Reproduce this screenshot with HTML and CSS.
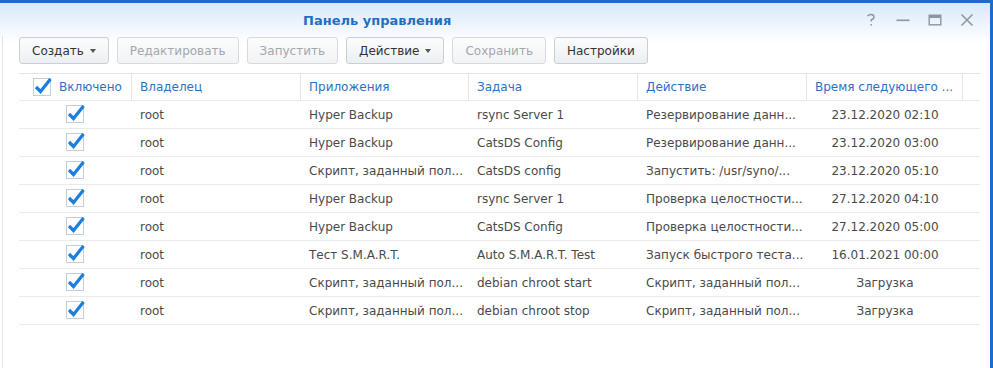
FILE: index.html
```html
<!DOCTYPE html>
<html lang="ru">
<head>
<meta charset="utf-8">
<title>Панель управления</title>
<link rel="stylesheet" href="styles.css">
</head>
<body>
<div class="window">
  <div class="titlebar">
    <div class="title">Панель управления</div>
    <div class="controls">
      <span class="ctl"><svg width="14" height="14" viewBox="0 0 14 14"><path d="M3.5 3.2 Q4.5 1.5 7 1.5 Q10 1.5 10 4 Q10 6 7.2 6.8 L7.2 8.5" fill="none" stroke="#8d959d" stroke-width="1.4"/><rect x="6.5" y="11" width="1.4" height="1.6" fill="#8d959d"/></svg></span>
      <span class="ctl"><svg width="14" height="14" viewBox="0 0 14 14"><rect x="0.5" y="6.5" width="13" height="1.6" fill="#8d959d"/></svg></span>
      <span class="ctl"><svg width="14" height="14" viewBox="0 0 14 14"><rect x="1.2" y="2.2" width="11.6" height="9.6" fill="none" stroke="#8d959d" stroke-width="1.4"/><rect x="1" y="2" width="12" height="3" fill="#8d959d"/></svg></span>
      <span class="ctl"><svg width="14" height="14" viewBox="0 0 14 14"><path d="M1.5 1.5 L12.5 12.5 M12.5 1.5 L1.5 12.5" stroke="#8d959d" stroke-width="1.5"/></svg></span>
    </div>
  </div>
  <div class="content">
    <div class="toolbar">
      <button class="btn">Создать<span class="caret"></span></button>
      <button class="btn disabled">Редактировать</button>
      <button class="btn disabled">Запустить</button>
      <button class="btn">Действие<span class="caret"></span></button>
      <button class="btn disabled">Сохранить</button>
      <button class="btn">Настройки</button>
    </div>
    <div class="grid">
      <div class="row head">
        <div class="cell c-check-head"><svg class="cb" width="20" height="20" viewBox="0 0 20 20"><rect x="0.5" y="2.5" width="17" height="17" fill="#fff" stroke="#c3ced9"/><polyline points="3,11 7.5,15.5 17.5,3" fill="none" stroke="#1a7fe0" stroke-width="3.2"/></svg><span>Включено</span></div>
        <div class="cell">Владелец</div>
        <div class="cell">Приложения</div>
        <div class="cell">Задача</div>
        <div class="cell">Действие</div>
        <div class="cell">Время следующего ...</div>
        <div class="cell last"></div>
      </div>
      <div class="row">
        <div class="cell c-check"><svg class="cb" width="20" height="20" viewBox="0 0 20 20"><rect x="0.5" y="2.5" width="17" height="17" fill="#fff" stroke="#c3ced9"/><polyline points="3,11 7.5,15.5 17.5,3" fill="none" stroke="#1a7fe0" stroke-width="3.2"/></svg></div>
        <div class="cell">root</div>
        <div class="cell">Hyper Backup</div>
        <div class="cell">rsync Server 1</div>
        <div class="cell">Резервирование данн...</div>
        <div class="cell center">23.12.2020 02:10</div>
        <div class="cell last"></div>
      </div>
      <div class="row">
        <div class="cell c-check"><svg class="cb" width="20" height="20" viewBox="0 0 20 20"><rect x="0.5" y="2.5" width="17" height="17" fill="#fff" stroke="#c3ced9"/><polyline points="3,11 7.5,15.5 17.5,3" fill="none" stroke="#1a7fe0" stroke-width="3.2"/></svg></div>
        <div class="cell">root</div>
        <div class="cell">Hyper Backup</div>
        <div class="cell">CatsDS Config</div>
        <div class="cell">Резервирование данн...</div>
        <div class="cell center">23.12.2020 03:00</div>
        <div class="cell last"></div>
      </div>
      <div class="row">
        <div class="cell c-check"><svg class="cb" width="20" height="20" viewBox="0 0 20 20"><rect x="0.5" y="2.5" width="17" height="17" fill="#fff" stroke="#c3ced9"/><polyline points="3,11 7.5,15.5 17.5,3" fill="none" stroke="#1a7fe0" stroke-width="3.2"/></svg></div>
        <div class="cell">root</div>
        <div class="cell">Скрипт, заданный пол...</div>
        <div class="cell">CatsDS config</div>
        <div class="cell">Запустить: /usr/syno/...</div>
        <div class="cell center">23.12.2020 05:10</div>
        <div class="cell last"></div>
      </div>
      <div class="row">
        <div class="cell c-check"><svg class="cb" width="20" height="20" viewBox="0 0 20 20"><rect x="0.5" y="2.5" width="17" height="17" fill="#fff" stroke="#c3ced9"/><polyline points="3,11 7.5,15.5 17.5,3" fill="none" stroke="#1a7fe0" stroke-width="3.2"/></svg></div>
        <div class="cell">root</div>
        <div class="cell">Hyper Backup</div>
        <div class="cell">rsync Server 1</div>
        <div class="cell">Проверка целостности...</div>
        <div class="cell center">27.12.2020 04:10</div>
        <div class="cell last"></div>
      </div>
      <div class="row">
        <div class="cell c-check"><svg class="cb" width="20" height="20" viewBox="0 0 20 20"><rect x="0.5" y="2.5" width="17" height="17" fill="#fff" stroke="#c3ced9"/><polyline points="3,11 7.5,15.5 17.5,3" fill="none" stroke="#1a7fe0" stroke-width="3.2"/></svg></div>
        <div class="cell">root</div>
        <div class="cell">Hyper Backup</div>
        <div class="cell">CatsDS Config</div>
        <div class="cell">Проверка целостности...</div>
        <div class="cell center">27.12.2020 05:00</div>
        <div class="cell last"></div>
      </div>
      <div class="row">
        <div class="cell c-check"><svg class="cb" width="20" height="20" viewBox="0 0 20 20"><rect x="0.5" y="2.5" width="17" height="17" fill="#fff" stroke="#c3ced9"/><polyline points="3,11 7.5,15.5 17.5,3" fill="none" stroke="#1a7fe0" stroke-width="3.2"/></svg></div>
        <div class="cell">root</div>
        <div class="cell">Тест S.M.A.R.T.</div>
        <div class="cell">Auto S.M.A.R.T. Test</div>
        <div class="cell">Запуск быстрого теста...</div>
        <div class="cell center">16.01.2021 00:00</div>
        <div class="cell last"></div>
      </div>
      <div class="row">
        <div class="cell c-check"><svg class="cb" width="20" height="20" viewBox="0 0 20 20"><rect x="0.5" y="2.5" width="17" height="17" fill="#fff" stroke="#c3ced9"/><polyline points="3,11 7.5,15.5 17.5,3" fill="none" stroke="#1a7fe0" stroke-width="3.2"/></svg></div>
        <div class="cell">root</div>
        <div class="cell">Скрипт, заданный пол...</div>
        <div class="cell">debian chroot start</div>
        <div class="cell">Скрипт, заданный пол...</div>
        <div class="cell center">Загрузка</div>
        <div class="cell last"></div>
      </div>
      <div class="row">
        <div class="cell c-check"><svg class="cb" width="20" height="20" viewBox="0 0 20 20"><rect x="0.5" y="2.5" width="17" height="17" fill="#fff" stroke="#c3ced9"/><polyline points="3,11 7.5,15.5 17.5,3" fill="none" stroke="#1a7fe0" stroke-width="3.2"/></svg></div>
        <div class="cell">root</div>
        <div class="cell">Скрипт, заданный пол...</div>
        <div class="cell">debian chroot stop</div>
        <div class="cell">Скрипт, заданный пол...</div>
        <div class="cell center">Загрузка</div>
        <div class="cell last"></div>
      </div>
    </div>
  </div>
</div>
</body>
</html>
```
FILE: styles.css
```css
html, body {
  margin: 0;
  padding: 0;
  background: #fff;
}
body {
  width: 993px;
  height: 368px;
  overflow: hidden;
  font-family: "DejaVu Sans", Verdana, sans-serif;
  font-size: 12px;
  color: #4a4a4a;
}
.window {
  box-sizing: border-box;
  width: 993px;
  height: 368px;
  border-top: 3px solid #1d6cc8;
  border-right: 3px solid #1d6cc8;
  background: linear-gradient(to bottom, #d8e9f9 0px, #ffffff 40px);
  display: flex;
  flex-direction: column;
}
.titlebar {
  height: 33px;
  display: flex;
  align-items: center;
  flex: none;
}
.title {
  margin-left: 303px;
  font-weight: bold;
  font-size: 13px;
  color: #1f6fc6;
  margin-top: 1px;
}
.controls {
  margin-left: auto;
  display: flex;
  align-items: center;
  margin-right: 16px;
  gap: 18px;
  margin-top: 1px;
}
.ctl {
  display: flex;
  width: 14px;
  height: 14px;
}
.content {
  flex: 1;
  margin-left: 2px;
  border-left: 1px solid #e1e3e6;
  padding: 1px 0 0 16px;
}
.toolbar {
  display: flex;
  gap: 8px;
  height: 27px;
}
.btn {
  box-sizing: border-box;
  height: 27px;
  margin: 0;
  padding: 0 12px;
  border: 1px solid #c8cfd6;
  border-radius: 3px;
  background: linear-gradient(to bottom, #fbfcfc, #eceff2);
  font-family: "DejaVu Sans", Verdana, sans-serif;
  font-size: 12px;
  color: #333;
  display: flex;
  align-items: center;
  gap: 6px;
}
.btn.disabled {
  color: #a4a8ac;
  border-color: #d6dbe0;
  background: linear-gradient(to bottom, #fbfcfc, #f1f3f5);
}
.caret {
  width: 0;
  height: 0;
  border-left: 3.5px solid transparent;
  border-right: 3.5px solid transparent;
  border-top: 4px solid #555;
  margin-top: 1px;
}
.grid {
  margin-top: 9px;
  width: 961px;
}
.row {
  display: grid;
  grid-template-columns: 113px 169px 168px 169px 169px 156px 17px;
  height: 28px;
  box-sizing: border-box;
  border-bottom: 1px solid #e8eaec;
}
.row.head {
  border-top: 1px solid #e3e6e9;
  color: #2a72c2;
}
.cell {
  box-sizing: border-box;
  display: flex;
  align-items: center;
  padding: 0 8px;
  white-space: nowrap;
  overflow: hidden;
}
.row.head .cell {
  border-right: 1px solid #e3e6e9;
}
.row.head .cell.last {
  border-right: none;
}
.cell.center {
  justify-content: center;
  padding: 0;
}
.c-check-head {
  padding-left: 14px;
  gap: 6px;
}
.c-check {
  justify-content: center;
  padding: 0;
}
.cb {
  flex: none;
  margin-top: -3px;
}
```
